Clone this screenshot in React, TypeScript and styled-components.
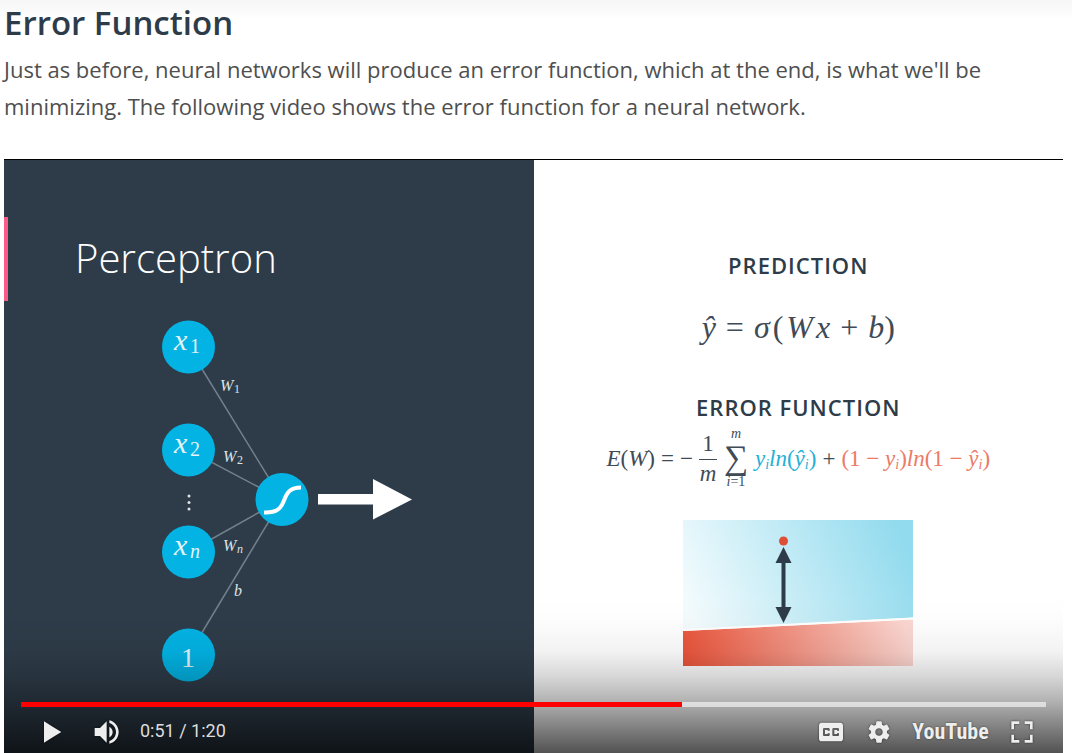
import React from "react";
import styled, { createGlobalStyle } from "styled-components";

const GlobalStyle = createGlobalStyle`
  * { box-sizing: border-box; }
  body { margin: 0; background: #fff; }
`;

const sans = `"Open Sans", "Noto Sans", sans-serif`;
const serif = `"Liberation Serif", "Times New Roman", serif`;
const navy = "#2e3c49";
const cyan = "#02b3e4";

const Page = styled.main`
  padding: 0 9px 0 4px;
  font-family: ${sans};
  background: linear-gradient(#f6f6f6, #fff 20px);
`;

const Heading = styled.h1`
  margin: 0;
  padding: 2px 0 0;
  font-size: 33px;
  line-height: 42px;
  font-weight: 600;
  color: ${navy};
`;

const Intro = styled.p`
  margin: 0;
  padding: 7px 0 34px;
  font-size: 22px;
  line-height: 37px;
  color: #4f4f4f;
`;

const Player = styled.section`
  position: relative;
  border-top: 1px solid #000;
  overflow: hidden;
`;

const Slide = styled.div`
  display: grid;
  grid-template-columns: 1fr 1fr;
`;

const DarkPane = styled.div`
  padding: 57px 0 62px;
  background: ${navy};
`;

const SlideTitle = styled.h2`
  display: flex;
  align-items: center;
  height: 84px;
  margin: 0 0 10px;
  padding: 0 0 4px 67px;
  border-left: 4px solid #f95c87;
  font-size: 40px;
  font-weight: 300;
  color: #fff;
`;

const Network = styled.svg`
  display: block;
  margin-left: 146px;
  font-family: ${serif};
  font-style: italic;
`;

const LightPane = styled.div`
  display: flex;
  flex-direction: column;
  align-items: center;
  padding-top: 89px;
  background: #fff;
`;

const SlideLabel = styled.h3`
  margin: 0;
  font-size: 22px;
  line-height: 32px;
  font-weight: 600;
  letter-spacing: 1px;
  color: ${navy};
`;

const Formula = styled.div<{ $size: number; $gap: number; $height: number }>`
  display: flex;
  align-items: center;
  gap: ${(p) => p.$gap}px;
  height: ${(p) => p.$height}px;
  font-family: ${serif};
  font-size: ${(p) => p.$size}px;
  line-height: 1;
  font-style: italic;
  white-space: nowrap;
  color: #3f4b56;
  sub {
    font-size: 14px;
    line-height: 0;
    vertical-align: -3px;
  }
`;

const Up = styled.span`
  font-style: normal;
`;

const Term = styled.span<{ $color?: string }>`
  color: ${(p) => p.$color ?? "inherit"};
`;

const Product = styled.span`
  display: flex;
  gap: 3px;
`;

const Fraction = styled.span`
  display: grid;
  justify-items: center;
  width: 18px;
  span:first-child {
    width: 100%;
    padding-bottom: 4px;
    border-bottom: 1px solid currentColor;
    text-align: center;
    font-style: normal;
  }
  span:last-child {
    padding-top: 2px;
  }
`;

const Sum = styled.span`
  display: grid;
  justify-items: center;
  width: 26px;
  font-size: 14px;
  line-height: 14px;
  b {
    font-size: 34px;
    line-height: 34px;
    font-weight: 400;
    font-style: normal;
  }
`;

const Plot = styled.svg`
  display: block;
  margin-top: 27px;
`;

const Controls = styled.div`
  position: absolute;
  inset: auto 0 0;
  padding: 105px 17px 0;
  background: linear-gradient(
    transparent,
    rgba(0, 0, 0, 0.01) 25px,
    rgba(0, 0, 0, 0.05) 55px,
    rgba(0, 0, 0, 0.16) 80px,
    rgba(0, 0, 0, 0.3) 104px,
    rgba(0, 0, 0, 0.42) 120px,
    rgba(0, 0, 0, 0.68)
  );
`;

const Seek = styled.input`
  display: block;
  appearance: none;
  width: 100%;
  height: 5px;
  margin: 0;
  background: linear-gradient(
    to right,
    #f00 var(--played),
    rgba(255, 255, 255, 0.6) var(--played)
  );
  &::-webkit-slider-thumb {
    appearance: none;
    width: 1px;
    height: 5px;
    background: transparent;
  }
`;

const Bar = styled.div`
  display: flex;
  align-items: flex-start;
  height: 46px;
  padding: 1px 0 0 7px;
`;

const IconButton = styled.button`
  display: flex;
  flex: none;
  width: 48px;
  height: 45px;
  padding: 0;
  border: 0;
  background: none;
  overflow: hidden;
  svg {
    flex: none;
    width: 48px;
    height: 48px;
    fill: #eee;
    filter: drop-shadow(0 0 1px rgba(0, 0, 0, 0.6));
  }
`;

const VolumeButton = styled(IconButton)`
  margin-left: 8px;
`;

const Time = styled.span`
  flex: 1;
  padding-left: 8px;
  font-family: Roboto, sans-serif;
  font-size: 18px;
  line-height: 46px;
  color: #ddd;
`;

const Brand = styled.a`
  width: 95px;
  text-align: center;
  font-family: "Liberation Sans Narrow", "Roboto Condensed", Roboto, sans-serif;
  font-size: 22px;
  line-height: 48px;
  height: 45px;
  font-weight: 700;
  color: #eee;
  text-decoration: none;
  text-shadow: 0 0 2px rgba(0, 0, 0, 0.6);
`;

const icons = {
  play: "M12 26 18.5 22V14L12 10zM18.5 22 25 18 18.5 14z",
  volume:
    "M8,21 L12,21 L17,26 L17,10 L12,15 L8,15 Z M19,14 L19,22 C20.48,21.32 21.5,19.77 21.5,18 C21.5,16.26 20.48,14.74 19,14 Z M19,11.29 C21.89,12.15 24,14.83 24,18 C24,21.17 21.89,23.85 19,24.71 L19,26.77 C23.01,25.86 26,22.28 26,18 C26,13.72 23.01,10.14 19,9.23 Z",
  captions:
    "M11,11 C9.89,11 9,11.9 9,13 L9,23 C9,24.1 9.89,25 11,25 L25,25 C26.1,25 27,24.1 27,23 L27,13 C27,11.9 26.1,11 25,11 Z M17,17 L15.5,17 L15.5,16.5 L13.5,16.5 L13.5,19.5 L15.5,19.5 L15.5,19 L17,19 L17,20 C17,20.55 16.55,21 16,21 L13,21 C12.45,21 12,20.55 12,20 L12,16 C12,15.45 12.45,15 13,15 L16,15 C16.55,15 17,15.45 17,16 Z M24,17 L22.5,17 L22.5,16.5 L20.5,16.5 L20.5,19.5 L22.5,19.5 L22.5,19 L24,19 L24,20 C24,20.55 23.55,21 23,21 L20,21 C19.45,21 19,20.55 19,20 L19,16 C19,15.45 19.45,15 20,15 L23,15 C23.55,15 24,15.45 24,16 Z",
  settings:
    "m 23.94,18.78 c .03,-0.25 .05,-0.51 .05,-0.78 0,-0.27 -0.02,-0.52 -0.05,-0.78 l 1.68,-1.32 c .15,-0.12 .19,-0.33 .09,-0.51 l -1.6,-2.76 c -0.09,-0.17 -0.31,-0.24 -0.48,-0.17 l -1.99,.8 c -0.41,-0.32 -0.86,-0.58 -1.35,-0.78 l -0.30,-2.12 c -0.02,-0.19 -0.19,-0.33 -0.39,-0.33 l -3.2,0 c -0.2,0 -0.36,.14 -0.39,.33 l -0.30,2.12 c -0.48,.2 -0.93,.47 -1.35,.78 l -1.99,-0.8 c -0.18,-0.07 -0.39,0 -0.48,.17 l -1.6,2.76 c -0.10,.17 -0.05,.39 .09,.51 l 1.68,1.32 c -0.03,.25 -0.05,.52 -0.05,.78 0,.26 .02,.52 .05,.78 l -1.68,1.32 c -0.15,.12 -0.19,.33 -0.09,.51 l 1.6,2.76 c .09,.17 .31,.24 .48,.17 l 1.99,-0.8 c .41,.32 .86,.58 1.35,.78 l .30,2.12 c .02,.19 .19,.33 .39,.33 l 3.2,0 c .2,0 .36,-0.14 .39,-0.33 l .30,-2.12 c .48,-0.2 .93,-0.47 1.35,-0.78 l 1.99,.8 c .18,.07 .39,0 .48,-0.17 l 1.6,-2.76 c .09,-0.17 .05,-0.39 -0.09,-0.51 l -1.68,-1.32 z m -5.94,2.01 c -1.54,0 -2.8,-1.25 -2.8,-2.8 0,-1.54 1.25,-2.8 2.8,-2.8 1.54,0 2.8,1.25 2.8,2.8 0,1.54 -1.25,2.8 -2.8,2.8 z",
  fullscreen:
    "M10,16h2v-4h4v-2h-6z M20,10v2h4v4h2v-6z M24,24h-4v2h6v-6h-2z M12,20h-2v6h6v-2h-4z",
};

const Icon = ({ name }: { name: keyof typeof icons }) => (
  <svg viewBox="0 0 36 36" aria-hidden="true">
    <path fillRule="evenodd" d={icons[name]} />
  </svg>
);

const inputs = [
  { cy: 36, label: "x", sub: "1" },
  { cy: 139, label: "x", sub: "2" },
  { cy: 241, label: "x", sub: "n" },
];

const weights = [
  { x: 70, y: 80, label: "W", sub: "1" },
  { x: 73, y: 151, label: "W", sub: "2" },
  { x: 73, y: 240, label: "W", sub: "n" },
  { x: 84, y: 285, label: "b", sub: "" },
];

const Perceptron = () => (
  <Network width="270" height="380" viewBox="0 0 270 380" role="img" aria-label="Perceptron">
    <g stroke="#72808f" strokeWidth="1.5">
      {[36, 139, 241, 344].map((y) => (
        <line key={y} x1="38.5" y1={y} x2="132" y2="188.5" />
      ))}
    </g>
    <g fill={cyan}>
      {[36, 139, 241, 344].map((y) => (
        <circle key={y} cx="38.5" cy={y} r="26.5" />
      ))}
      <circle cx="132" cy="188.5" r="26.5" />
    </g>
    <g fill="#e4f4f8">
      {inputs.map(({ cy, label, sub }) => (
        <React.Fragment key={sub}>
          <text x="24" y={cy + 3} fontSize="30">{label}</text>
          <text x="40" y={cy + 6} fontSize="20" fontStyle={sub === "n" ? "italic" : "normal"}>{sub}</text>
        </React.Fragment>
      ))}
      <text x="38" y="356" fontSize="28" fontStyle="normal" textAnchor="middle">1</text>
    </g>
    <g fill="#dfe3e6">
      {weights.map(({ x, y, label, sub }) => (
        <React.Fragment key={label + sub}>
          <text x={x} y={y} fontSize="16">{label}</text>
          <text x={x + 14} y={y + 2} fontSize="12" fontStyle={sub === "n" ? "italic" : "normal"}>{sub}</text>
        </React.Fragment>
      ))}
      <circle cx="39" cy="185" r="1.5" />
      <circle cx="39" cy="191.5" r="1.5" />
      <circle cx="39" cy="198" r="1.5" />
    </g>
    <path d="M114 201.5c13 .5 17-4 20-12s6-13 17-13" fill="none" stroke="#fff" strokeWidth="4" />
    <path d="M168 183h55v-15l39 20.500-39 20v-15h-55z" fill="#fff" />
  </Network>
);

const ErrorPlot = () => (
  <Plot width="230" height="146" viewBox="0 0 230 146" role="img" aria-label="Distance of a point to the boundary">
    <defs>
      <linearGradient id="sky" gradientUnits="userSpaceOnUse" x1="10" y1="100" x2="215" y2="10">
        <stop offset="0" stopColor="#f3fbfd" />
        <stop offset="1" stopColor="#92dbee" />
      </linearGradient>
      <linearGradient id="ground" gradientUnits="userSpaceOnUse" x1="0" y1="146" x2="220" y2="95">
        <stop offset="0" stopColor="#ea5238" />
        <stop offset="1" stopColor="#fbd6d0" />
      </linearGradient>
    </defs>
    <path d="M0 0h230v97.500L0 110z" fill="url(#sky)" />
    <path d="M0 111 230 99.500V146H0z" fill="url(#ground)" />
    <path d="M0 110 230 98.500" stroke="#fff" strokeWidth="2" />
    <circle cx="100.500" cy="21" r="4.500" fill="#de4f35" />
    <path d="M100.500 27l8 16h-6v44h6l-8 16-8-16h6V43h-6z" fill={navy} />
  </Plot>
);

const LowerLabel = styled(SlideLabel)`
  margin-top: 18px;
`;

const blue = "#25b0d6";
const coral = "#ec7a66";

export default function App() {
  const played = 51.6;
  const duration = 80;
  return (
    <Page>
      <GlobalStyle />
      <Heading>Error Function</Heading>
      <Intro>
        Just as before, neural networks will produce an error function, which at the end, is what we'll be
        minimizing. The following video shows the error function for a neural network.
      </Intro>
      <Player aria-label="Video player">
        <Slide>
          <DarkPane>
            <SlideTitle>Perceptron</SlideTitle>
            <Perceptron />
          </DarkPane>
          <LightPane>
            <SlideLabel>PREDICTION</SlideLabel>
            <Formula $size={32} $gap={10} $height={92}>
              <Term>ŷ</Term>
              <Up>=</Up>
              <Product>
                <Term>σ</Term>
                <Up>(</Up>
                <Term>W</Term>
                <Term>x</Term>
              </Product>
              <Up>+</Up>
              <Term>b<Up>)</Up></Term>
            </Formula>
            <LowerLabel>ERROR FUNCTION</LowerLabel>
            <Formula $size={23} $gap={6} $height={70}>
              <Term>E<Up>(</Up>W<Up>)</Up></Term>
              <Up>=</Up>
              <Up>−</Up>
              <Fraction>
                <span>1</span>
                <span>m</span>
              </Fraction>
              <Sum>
                <span>m</span>
                <b>∑</b>
                <span>i<Up>=1</Up></span>
              </Sum>
              <Term $color={blue}>y<sub>i</sub>ln<Up>(</Up>ŷ<sub>i</sub><Up>)</Up></Term>
              <Up>+</Up>
              <Term $color={coral}>
                <Up>(1 − </Up>y<sub>i</sub><Up>)</Up>ln<Up>(1 − </Up>ŷ<sub>i</sub><Up>)</Up>
              </Term>
            </Formula>
            <ErrorPlot />
          </LightPane>
        </Slide>
        <Controls>
          <Seek
            type="range"
            aria-label="Seek"
            min={0}
            max={duration}
            step={0.1}
            defaultValue={played}
            style={{ "--played": `${(played / duration) * 100}%` } as React.CSSProperties}
          />
          <Bar>
            <IconButton aria-label="Play"><Icon name="play" /></IconButton>
            <VolumeButton aria-label="Mute"><Icon name="volume" /></VolumeButton>
            <Time>0:51 / 1:20</Time>
            <IconButton aria-label="Subtitles"><Icon name="captions" /></IconButton>
            <IconButton aria-label="Settings"><Icon name="settings" /></IconButton>
            <Brand href="#youtube">YouTube</Brand>
            <IconButton aria-label="Full screen"><Icon name="fullscreen" /></IconButton>
          </Bar>
        </Controls>
      </Player>
    </Page>
  );
}
